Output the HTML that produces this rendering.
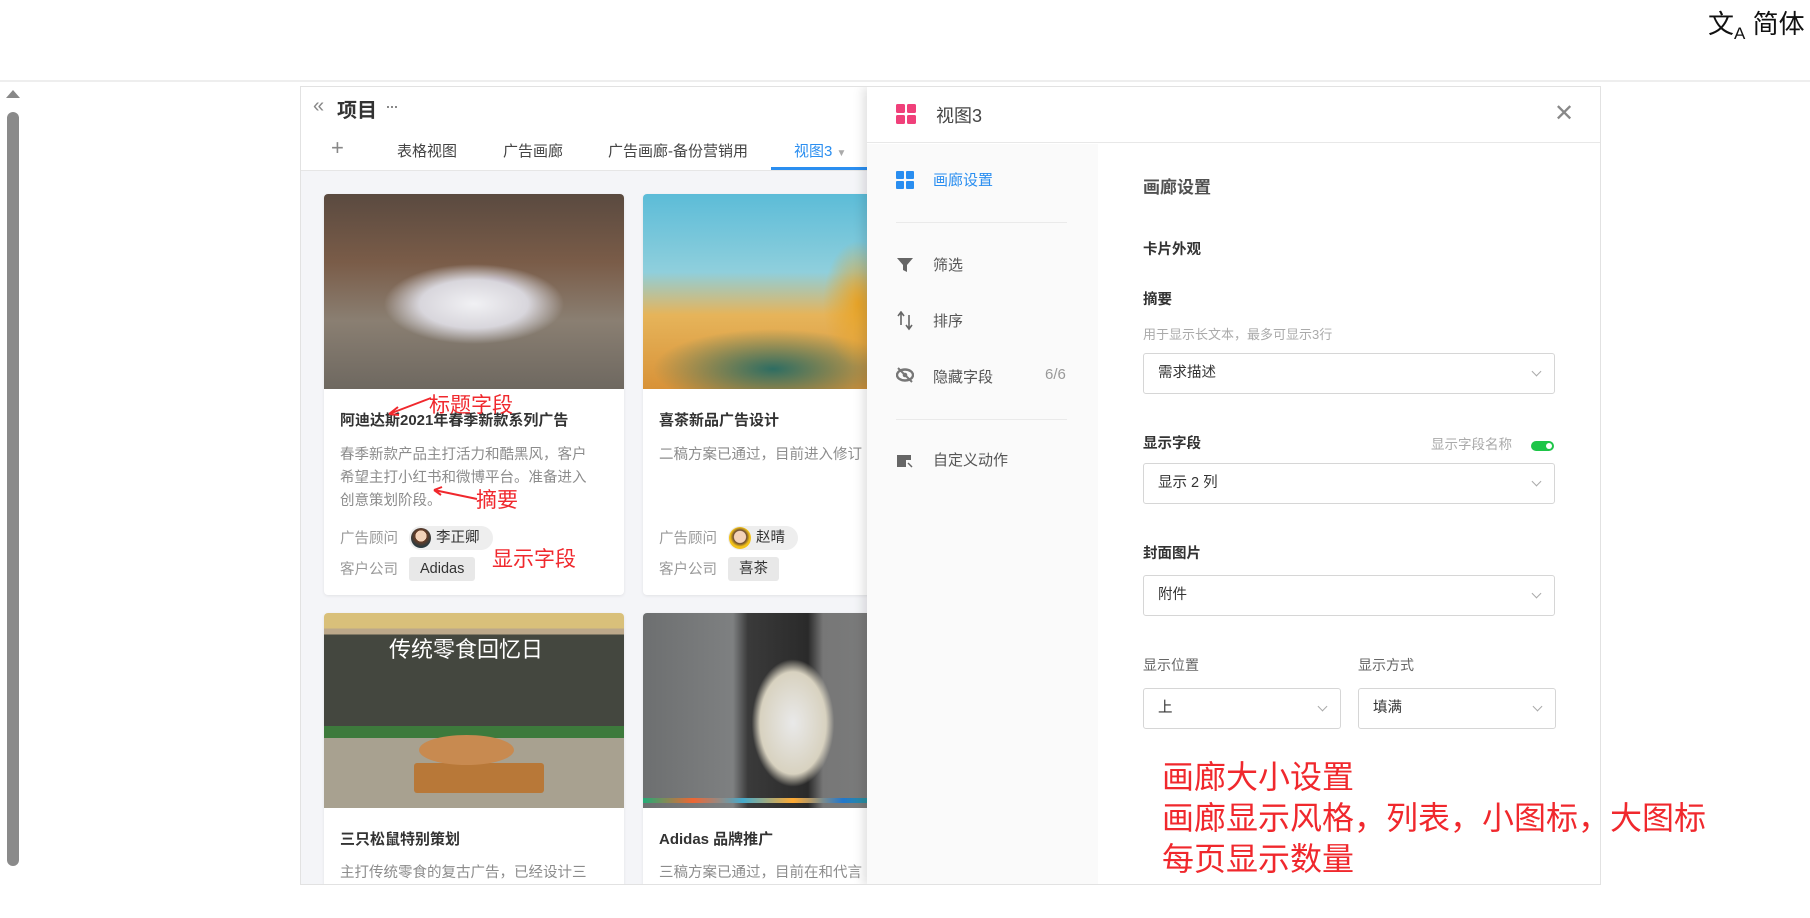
<!DOCTYPE html>
<html><head><meta charset="utf-8">
<style>
*{margin:0;padding:0;box-sizing:border-box}
body{width:1810px;height:918px;background:#fff;position:relative;overflow:hidden;font-family:"Liberation Sans","Noto Sans CJK SC",sans-serif;color:#333}
.a{position:absolute;white-space:nowrap}
.card{position:absolute;background:#fff;border-radius:4px;box-shadow:0 1px 3px rgba(0,0,0,.08);overflow:hidden}
.img{position:absolute;left:0;top:0;width:100%}
.t{font-size:15px;font-weight:bold;color:#333}
.d{font-size:14.5px;color:#8c8c8c;line-height:23px}
.lab{font-size:14.5px;color:#999}
.pill{position:absolute;height:24px;border-radius:12px;background:#eee;font-size:14.5px;line-height:24px;color:#333}
.tag{position:absolute;height:24px;border-radius:3px;background:#e8e8e8;font-size:14.5px;line-height:24px;color:#333;padding:0 11px}
.sel{position:absolute;border:1px solid #d6d6d6;border-radius:3px;background:#fff;font-size:14.5px;color:#333;padding-left:14px;line-height:38px}
.sel:after{content:"";position:absolute;right:14px;top:14px;width:6px;height:6px;border-right:1.3px solid #aaa;border-bottom:1.3px solid #aaa;transform:rotate(45deg)}
.nav{font-size:15px;color:#555}
.h{font-size:14.5px;font-weight:bold;color:#333}
.red{color:#f0282d}
</style></head><body>
<div class="a" style="left:1708px;top:4px;font-size:26px;color:#111"><span style="font-size:26px">文<sub style="font-size:17px">A</sub></span> 简体</div>
<div class="a" style="left:0;top:80px;width:1810px;height:2px;background:#eee"></div>
<div class="a" style="left:6px;top:90px;width:0;height:0;border-left:7px solid transparent;border-right:7px solid transparent;border-bottom:8px solid #888"></div>
<div class="a" style="left:7px;top:112px;width:12px;height:754px;background:#8a8a8a;border-radius:6px"></div>
<div class="a" style="left:300px;top:86px;width:1301px;height:799px;border:1px solid #e2e2e2;background:#f4f5f8;overflow:hidden">
 <div class="a" style="left:0;top:0;width:1301px;height:84px;background:#fff;border-bottom:1px solid #e6e6e6"></div>
 <div class="a" style="left:12px;top:8px;font-size:20px;color:#888">«</div>
 <div class="a" style="left:36px;top:7px;font-size:20px;font-weight:bold;color:#333">项目</div>
 <div class="a" style="left:84px;top:9px;font-size:18px;color:#777;letter-spacing:-2px">···</div>
 <div class="a" style="left:30px;top:48px;font-size:22px;color:#888;font-weight:300">+</div>
 <div class="a" style="left:96px;top:53px;font-size:15px;color:#444">表格视图</div>
 <div class="a" style="left:202px;top:53px;font-size:15px;color:#444">广告画廊</div>
 <div class="a" style="left:307px;top:53px;font-size:15px;color:#444">广告画廊-备份营销用</div>
 <div class="a" style="left:493px;top:53px;font-size:15px;color:#2a8ef0">视图3 <span style="color:#aaa;font-size:10px">▼</span></div>
 <div class="a" style="left:470px;top:80px;width:96px;height:3px;background:#2a8ef0"></div>
 <div class="card" style="left:23px;top:107px;width:300px;height:401px">
  <div class="img" style="height:195px;background:radial-gradient(ellipse 90px 40px at 150px 110px,#f1f1f4 0,#d8d6dc 60%,transparent 100%),radial-gradient(ellipse 30px 20px at 170px 100px,#6b2ea0,transparent),linear-gradient(180deg,#5a4a40 0,#7a5c48 35%,#8a7f72 65%,#6e6860 100%)"></div>
  <div class="a t" style="left:16px;top:215px">阿迪达斯2021年春季新款系列广告</div>
  <div class="a d" style="left:16px;top:250px;white-space:normal;width:255px">春季新款产品主打活力和酷黑风，客户希望主打小红书和微博平台。准备进入创意策划阶段。</div>
  <div class="a lab" style="left:16px;top:333px">广告顾问</div>
  <div class="pill" style="left:85px;top:332px;width:84px"><span style="position:absolute;left:2px;top:2px;width:20px;height:20px;border-radius:50%;background:radial-gradient(circle at 50% 40%,#f3d2b8 35%,#6a3d25 36%,#2a3a40 70%)"></span><span style="position:absolute;left:27px">李正卿</span></div>
  <div class="a lab" style="left:16px;top:364px">客户公司</div>
  <div class="tag" style="left:85px;top:363px">Adidas</div>
 </div>
 <div class="card" style="left:342px;top:107px;width:300px;height:401px">
  <div class="img" style="height:195px;background:radial-gradient(ellipse 50px 90px at 215px 110px,#e8a428,transparent 70%),radial-gradient(ellipse 120px 40px at 130px 175px,#2e6d62,transparent),linear-gradient(180deg,#5cbcd8 0,#8fcfdc 40%,#e6b45a 62%,#d89238 100%)"></div>
  <div class="a t" style="left:16px;top:215px">喜茶新品广告设计</div>
  <div class="a d" style="left:16px;top:250px">二稿方案已通过，目前进入修订</div>
  <div class="a lab" style="left:16px;top:333px">广告顾问</div>
  <div class="pill" style="left:85px;top:332px;width:70px"><span style="position:absolute;left:1px;top:1px;width:22px;height:22px;border-radius:50%;background:radial-gradient(circle at 50% 45%,#f3d2b8 35%,#6a4a30 40%,#f3c21a 60%)"></span><span style="position:absolute;left:28px">赵晴</span></div>
  <div class="a lab" style="left:16px;top:364px">客户公司</div>
  <div class="tag" style="left:85px;top:363px">喜茶</div>
 </div>
 <div class="card" style="left:23px;top:526px;width:300px;height:300px">
  <div class="img" style="height:195px;background:linear-gradient(180deg,#d9c07a 0,#d9c07a 8%,#bca88a 8%,#bca88a 11%,#44473f 11%,#44473f 58%,#3d7a3c 58%,#3d7a3c 64%,#a8a190 64%,#a8a190 100%)"></div>
  <div class="a" style="left:65px;top:19px;font-size:22px;color:#fff">传统零食回忆日</div>
  <div class="a" style="left:90px;top:150px;width:130px;height:30px;background:#b87838;border-radius:3px"></div>
  <div class="a" style="left:95px;top:122px;width:95px;height:30px;background:#c88a50;border-radius:50%"></div>
  <div class="a t" style="left:16px;top:215px">三只松鼠特别策划</div>
  <div class="a d" style="left:16px;top:249px">主打传统零食的复古广告，已经设计三</div>
 </div>
 <div class="card" style="left:342px;top:526px;width:300px;height:300px">
  <div class="img" style="height:195px;background:radial-gradient(ellipse 55px 85px at 150px 110px,#e9e9e9 0,#d8d2c0 60%,transparent 75%),linear-gradient(90deg,#6d6f70 0,#7e8081 30%,#3a3a3a 35%,#2a2a2a 55%,#777 60%,#808282 100%)"></div>
  <div class="a" style="left:0;top:185px;width:300px;height:5px;background:linear-gradient(90deg,#2a7,#e63,#4ac,#fa3,#27c,#3a6,#888)"></div>
  <div class="a t" style="left:16px;top:215px">Adidas 品牌推广</div>
  <div class="a d" style="left:16px;top:249px">三稿方案已通过，目前在和代言</div>
 </div>
 <div class="a" style="left:566px;top:0;width:735px;height:799px;background:#fff;box-shadow:-4px 0 10px rgba(0,0,0,.12)">
  <div class="a" style="left:0;top:0;width:735px;height:56px;border-bottom:1px solid #e8e8e8"></div>
  <svg class="a" style="left:29px;top:17px" width="20" height="20"><g fill="#f0407a"><rect x="0" y="0" width="9" height="9" rx="1.5"/><rect x="11" y="0" width="9" height="9" rx="1.5"/><rect x="0" y="11" width="9" height="9" rx="1.5"/><rect x="11" y="11" width="9" height="9" rx="1.5"/></g></svg>
  <div class="a" style="left:69px;top:15px;font-size:18px;color:#444">视图3</div>
  <div class="a" style="left:687px;top:12px;font-size:24px;color:#888;font-weight:300">✕</div>
  <div class="a" style="left:0;top:57px;width:231px;height:742px;background:#fafafa"></div>
  <svg class="a" style="left:29px;top:84px" width="18" height="18"><g fill="#2a8ef0"><rect x="0" y="0" width="8" height="8" rx="1"/><rect x="10" y="0" width="8" height="8" rx="1"/><rect x="0" y="10" width="8" height="8" rx="1"/><rect x="10" y="10" width="8" height="8" rx="1"/></g></svg>
  <div class="a nav" style="left:66px;top:82px;color:#2a8ef0">画廊设置</div>
  <div class="a" style="left:29px;top:135px;width:171px;height:1px;background:#eaeaea"></div>
  <svg class="a" style="left:30px;top:170px" width="16" height="16"><path d="M0 1H16L10 8V15L6 13V8Z" fill="#666"/></svg>
  <div class="a nav" style="left:66px;top:167px">筛选</div>
  <svg class="a" style="left:30px;top:224px" width="16" height="20"><path d="M4 14V2M1 5L4 1 7 5M12 4V17M9 14L12 18 15 14" stroke="#666" stroke-width="1.6" fill="none"/></svg>
  <div class="a nav" style="left:66px;top:223px">排序</div>
  <svg class="a" style="left:29px;top:280px" width="18" height="16"><ellipse cx="9" cy="8" rx="8" ry="5.5" fill="none" stroke="#777" stroke-width="2.4"/><circle cx="9" cy="8" r="2.3" fill="#777"/><path d="M2 1L16 15" stroke="#777" stroke-width="2"/></svg>
  <div class="a nav" style="left:66px;top:279px">隐藏字段</div>
  <div class="a nav" style="left:178px;top:279px;color:#999">6/6</div>
  <div class="a" style="left:29px;top:332px;width:171px;height:1px;background:#eaeaea"></div>
  <svg class="a" style="left:30px;top:367px" width="16" height="14"><path d="M0 1H14V6H9V13H0Z" fill="#666"/><path d="M11 9L15 13" stroke="#666" stroke-width="1.5"/></svg>
  <div class="a nav" style="left:66px;top:362px">自定义动作</div>
  <div class="a" style="left:276px;top:86px;font-size:17px;color:#333;font-weight:bold;opacity:.85">画廊设置</div>
  <div class="a h" style="left:276px;top:151px">卡片外观</div>
  <div class="a h" style="left:276px;top:201px">摘要</div>
  <div class="a" style="left:276px;top:237px;font-size:13px;color:#aaa">用于显示长文本，最多可显示3行</div>
  <div class="sel" style="left:276px;top:266px;width:412px;height:41px">需求描述</div>
  <div class="a h" style="left:276px;top:345px">显示字段</div>
  <div class="a" style="left:564px;top:346px;font-size:13.5px;color:#aaa">显示字段名称</div>
  <div class="a" style="left:664px;top:354px;width:23px;height:10px;border-radius:5px;background:#1ec548"><span style="position:absolute;right:2px;top:2px;width:6px;height:6px;border-radius:50%;background:#fff"></span></div>
  <div class="sel" style="left:276px;top:376px;width:412px;height:41px">显示 2 列</div>
  <div class="a h" style="left:276px;top:455px">封面图片</div>
  <div class="sel" style="left:276px;top:488px;width:412px;height:41px">附件</div>
  <div class="a" style="left:276px;top:568px;font-size:14px;color:#666">显示位置</div>
  <div class="a" style="left:491px;top:568px;font-size:14px;color:#666">显示方式</div>
  <div class="sel" style="left:276px;top:601px;width:198px;height:41px">上</div>
  <div class="sel" style="left:491px;top:601px;width:198px;height:41px">填满</div>
 </div>
</div>
<div class="a red" style="left:1162px;top:757px;font-size:32px;line-height:41px">画廊大小设置<br>画廊显示风格，列表，小图标，大图标<br>每页显示数量</div>
<div class="a red" style="left:429px;top:389px;font-size:21px">标题字段</div>
<svg class="a" style="left:385px;top:395px" width="50" height="25"><path d="M46 3L4 19M4 19L13 12M4 19L14 20" stroke="#f0282d" stroke-width="2" fill="none"/></svg>
<div class="a red" style="left:476px;top:484px;font-size:21px">摘要</div>
<svg class="a" style="left:430px;top:485px" width="50" height="20"><path d="M47 14L4 5M4 5L12 2M4 5L11 10" stroke="#f0282d" stroke-width="2" fill="none"/></svg>
<div class="a red" style="left:492px;top:543px;font-size:21px">显示字段</div>
</body></html>
